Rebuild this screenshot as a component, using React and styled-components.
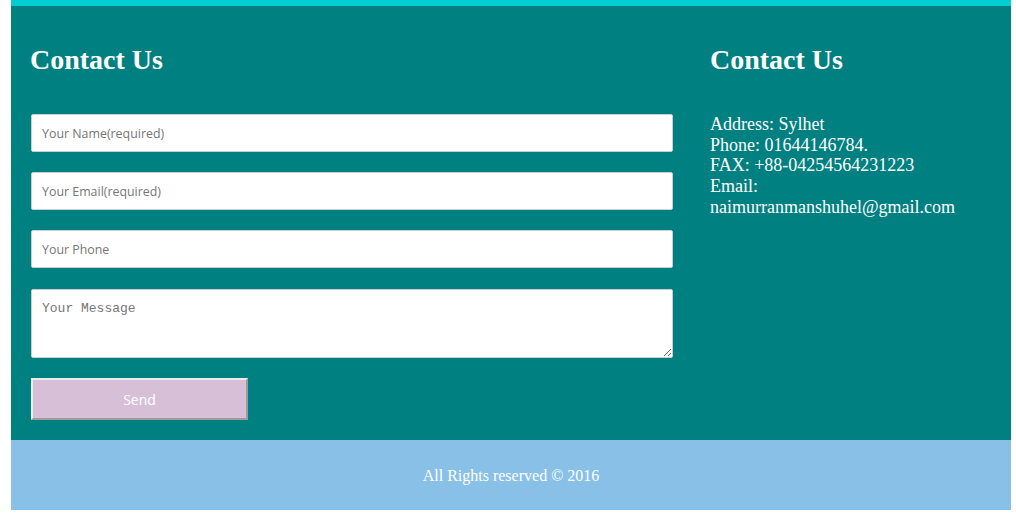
import React from 'react';
import styled, { createGlobalStyle } from 'styled-components';

const GlobalStyle = createGlobalStyle`
  body {
    margin: 0;
    background: #fff;
    font-family: "Liberation Serif", "Times New Roman", serif;
  }
`;

const Page = styled.div`
  width: 1000px;
  margin-left: 11px;
  padding-bottom: 3px;
`;

const TopBar = styled.div`
  height: 6px;
  background: #00ced1;
`;

const Main = styled.section`
  display: grid;
  grid-template-columns: 700px 300px;
  background: #008080;
  padding: 20px 0 20px;
`;

const Column = styled.div`
  padding: ${(p) => (p.right ? '0 20px 0 0' : '0 0 0 20px')};
`;

const Heading = styled.h2`
  margin: 18px 0 38px -1px;
  font-family: "Liberation Serif", "Times New Roman", serif;
  font-size: 28px;
  font-weight: bold;
  line-height: 32px;
  color: #fff;
`;

const Form = styled.form`
  display: flex;
  flex-direction: column;
  width: 642px;
`;

const Input = styled.input`
  box-sizing: border-box;
  width: 100%;
  height: 38px;
  margin: 0 0 20px;
  padding: 0 10px;
  border: 1px solid #c9ced3;
  border-radius: 2px;
  background: #fff;
  font-family: "Open Sans", "DejaVu Sans", sans-serif;
  font-size: 12.4px;
  color: #333;
  outline: none;
  &::placeholder {
    color: #767676;
  }
`;

const Message = styled.textarea`
  box-sizing: border-box;
  width: 100%;
  height: 69px;
  margin: 1px 0 20px;
  padding: 11px 10px 9px;
  border: 1px solid #c9ced3;
  border-radius: 2px;
  background: #fff;
  font-family: "Liberation Mono", "Courier New", monospace;
  font-size: 13px;
  outline: none;
  &::placeholder {
    color: #767676;
  }
`;

const SendButton = styled.button`
  box-sizing: border-box;
  width: 217px;
  height: 42px;
  padding: 0;
  background: #d8bfd8;
  border: 2px solid;
  border-color: #ececec #9c9c9c #9c9c9c #ececec;
  font-family: "Open Sans", "DejaVu Sans", sans-serif;
  font-size: 14px;
  color: #fff;
  cursor: pointer;
`;

const Info = styled.p`
  margin: 0 0 0 -1px;
  font-size: 18px;
  line-height: 20.7px;
  color: #fff;
`;

const Footer = styled.footer`
  box-sizing: border-box;
  height: 70px;
  padding-top: 2px;
  display: flex;
  align-items: center;
  justify-content: center;
  background: #88c0e8;
  font-size: 16px;
  color: #fff;
`;

export default () => (
  <>
    <GlobalStyle />
    <Page>
      <TopBar />
      <Main>
        <Column>
          <Heading>Contact Us</Heading>
          <Form onSubmit={(e) => e.preventDefault()}>
            <Input type="text" placeholder="Your Name(required)" />
            <Input type="email" placeholder="Your Email(required)" />
            <Input type="text" placeholder="Your Phone" />
            <Message placeholder="Your Message" />
            <SendButton type="submit">Send</SendButton>
          </Form>
        </Column>
        <Column right>
          <Heading>Contact Us</Heading>
          <Info>
            Address: Sylhet
            <br />
            Phone: 01644146784.
            <br />
            FAX: +88-04254564231223
            <br />
            Email: naimurranmanshuhel@gmail.com
          </Info>
        </Column>
      </Main>
      <Footer>All Rights reserved © 2016</Footer>
    </Page>
  </>
);
